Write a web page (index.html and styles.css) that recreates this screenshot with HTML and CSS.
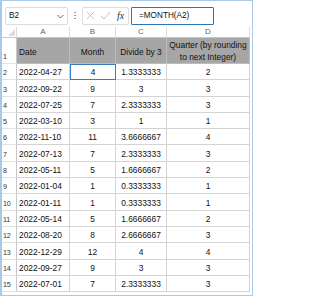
FILE: index.html
```html
<!DOCTYPE html>
<html>
<head>
<meta charset="utf-8">
<link rel="stylesheet" href="styles.css">
</head>
<body>
<div class="frame">
  <div class="fbar">
    <div class="namebox"><span>B2</span>
      <svg class="chev" width="7" height="5" viewBox="0 0 7 5"><polyline points="0.5,1 3.5,4 6.5,1" fill="none" stroke="#555" stroke-width="0.9"/></svg>
    </div>
    <div class="dots"><i></i><i></i><i></i></div>
    <div class="fxbox">
      <svg width="9" height="9" viewBox="0 0 9 9"><path d="M1 1L8 8M8 1L1 8" stroke="#bdbdbd" stroke-width="0.9" fill="none"/></svg>
      <svg width="11" height="9" viewBox="0 0 11 9"><path d="M1 5L4 8L10 1" stroke="#bdbdbd" stroke-width="0.9" fill="none"/></svg>
      <span class="fx">fx</span>
    </div>
    <div class="formula">=MONTH(A2)</div>
  </div>
  <div class="grid">
    <div class="corner"><span class="tri"></span></div>
    <div class="ch">A</div><div class="ch">B</div><div class="ch">C</div><div class="ch last">D</div>

    <div class="rh r1">1</div>
    <div class="hd left">Date</div>
    <div class="hd">Month</div>
    <div class="hd">Divide by 3</div>
    <div class="hd last two">Quarter (by rounding<br>to next Integer)</div>

    <div class="rh">2</div><div class="c l">2022-04-27</div><div class="c sel">4</div><div class="c">1.3333333</div><div class="c last">2</div>
    <div class="rh">3</div><div class="c l">2022-09-22</div><div class="c">9</div><div class="c">3</div><div class="c last">3</div>
    <div class="rh">4</div><div class="c l">2022-07-25</div><div class="c">7</div><div class="c">2.3333333</div><div class="c last">3</div>
    <div class="rh">5</div><div class="c l">2022-03-10</div><div class="c">3</div><div class="c">1</div><div class="c last">1</div>
    <div class="rh">6</div><div class="c l">2022-11-10</div><div class="c">11</div><div class="c">3.6666667</div><div class="c last">4</div>
    <div class="rh">7</div><div class="c l">2022-07-13</div><div class="c">7</div><div class="c">2.3333333</div><div class="c last">3</div>
    <div class="rh">8</div><div class="c l">2022-05-11</div><div class="c">5</div><div class="c">1.6666667</div><div class="c last">2</div>
    <div class="rh">9</div><div class="c l">2022-01-04</div><div class="c">1</div><div class="c">0.3333333</div><div class="c last">1</div>
    <div class="rh">10</div><div class="c l">2022-01-11</div><div class="c">1</div><div class="c">0.3333333</div><div class="c last">1</div>
    <div class="rh">11</div><div class="c l">2022-05-14</div><div class="c">5</div><div class="c">1.6666667</div><div class="c last">2</div>
    <div class="rh">12</div><div class="c l">2022-08-20</div><div class="c">8</div><div class="c">2.6666667</div><div class="c last">3</div>
    <div class="rh">13</div><div class="c l">2022-12-29</div><div class="c">12</div><div class="c">4</div><div class="c last">4</div>
    <div class="rh">14</div><div class="c l">2022-09-27</div><div class="c">9</div><div class="c">3</div><div class="c last">3</div>
    <div class="rh">15</div><div class="c l">2022-07-01</div><div class="c">7</div><div class="c">2.3333333</div><div class="c last">3</div>
  </div>
</div>
</body>
</html>
```
FILE: styles.css
```css
html, body { margin: 0; padding: 0; background: #fff; }
body { font-family: "Liberation Sans", Arial, sans-serif; color: #111; }
.frame {
  width: 253px; height: 296px; box-sizing: border-box;
  border: 1px solid #a9c9e8; border-left-width: 2px;
  background: #fff;
}
.fbar {
  display: flex; align-items: center; height: 25px;
  padding: 4px 0 0 3px; box-sizing: border-box;
}
.namebox {
  width: 63px; height: 18px; box-sizing: border-box;
  border: 1px solid #dcdcdc; border-radius: 2px;
  display: flex; align-items: center; justify-content: space-between;
  padding: 0 3px 0 3px; font-size: 8.2px; color: #111;
}
.chev { margin-top: 1px; }
.dots { width: 14px; display: flex; flex-direction: column; align-items: center; gap: 1.5px; }
.dots i { display: block; width: 1.2px; height: 1.2px; background: #9a9a9a; }
.fxbox {
  width: 47px; height: 18px; box-sizing: border-box;
  border: 1px solid #dcdcdc; border-radius: 2px;
  display: flex; align-items: center; gap: 5px; padding-left: 3px;
}
.fx { font-family: "Liberation Serif", serif; font-style: italic; font-size: 10px; color: #333; margin-left: 1px; }
.formula {
  width: 83px; height: 18px; box-sizing: border-box; margin-left: 2px;
  border: 1.5px solid #2e75b6; border-radius: 1px;
  font-size: 8.2px; color: #111; display: flex; align-items: center; padding-left: 7px;
}
.grid {
  margin-top: 1px;
  display: grid;
  grid-template-columns: 15px 53px 46px 51px 83px;
  grid-template-rows: 11px 26px repeat(14, 16.3px);
}
.grid > div { box-sizing: border-box; }
.corner { border-right: 1px solid #d8d8d8; border-bottom: 1px solid #c8c8c8; position: relative; }
.tri {
  position: absolute; right: 1px; bottom: 1px; width: 0; height: 0;
  border-left: 7px solid transparent; border-bottom: 7px solid #dcdcdc;
}
.ch {
  font-size: 8px; color: #666; text-align: center; line-height: 10px;
  border-right: 1px solid #dcdcdc; border-bottom: 1px solid #c8c8c8;
}
.rh {
  font-size: 7.2px; color: #333; display: flex; align-items: flex-end;
  padding: 0 0 2px 1px; letter-spacing: -0.3px;
  border-right: 1px solid #c8c8c8; border-bottom: 1px solid #e2e2e2;
}
.hd {
  background: #a6a6a6; font-size: 8.4px; color: #111;
  display: flex; align-items: center; justify-content: center; text-align: center;
  padding-top: 3px; line-height: 12px;
  border-right: 1px solid #bdbdbd; border-bottom: 1px solid #bdbdbd;
}
.hd.left { justify-content: flex-start; padding-left: 2px; }
.hd.two { padding-top: 0; }
.c {
  font-size: 8.4px; color: #111;
  display: flex; align-items: flex-end; justify-content: center;
  padding-bottom: 2px;
  border-right: 1px solid #d4d4d4; border-bottom: 1px solid #d4d4d4;
}
.c.l { justify-content: flex-start; padding-left: 2px; }
.c.sel { border: 1.6px solid #3a7cc0; }
```
